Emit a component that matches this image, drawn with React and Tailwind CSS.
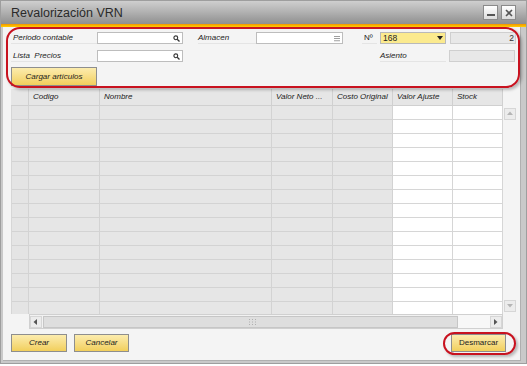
import React from "react";

const F = { fontFamily: '"Liberation Sans", Arial, sans-serif' };

function SearchIcon() {
  return (
    <svg width="7" height="7" viewBox="0 0 7 7" className="shrink-0">
      <circle cx="2.8" cy="2.8" r="1.9" fill="none" stroke="#333" strokeWidth="1.1" />
      <line x1="4.2" y1="4.2" x2="6.5" y2="6.5" stroke="#333" strokeWidth="1.3" />
    </svg>
  );
}

function ListIcon() {
  return (
    <svg width="6" height="7" viewBox="0 0 6 7" className="shrink-0">
      <rect x="0" y="1" width="6" height="0.8" fill="#888" />
      <rect x="0" y="3.2" width="6" height="0.8" fill="#888" />
      <rect x="0" y="5.4" width="6" height="0.8" fill="#888" />
    </svg>
  );
}

function Label({ children, w, className = "" }) {
  return (
    <div
      className={`h-full flex items-center text-[8px] text-[#222] italic border-b border-[#e4e4e4] ${className}`}
      style={{ width: w }}
    >
      {children}
    </div>
  );
}

function Input({ w, icon }) {
  return (
    <div
      className="h-full bg-white border border-[#bdbdbd] flex items-center justify-end pr-[2px]"
      style={{ width: w }}
    >
      {icon}
    </div>
  );
}

function YButton({ children, w, className = "" }) {
  return (
    <div
      className={`h-full flex items-center justify-center border border-[#8e8e8e] bg-gradient-to-b from-[#fcecad] to-[#f2cf5a] text-[8px] italic text-[#222] ${className}`}
      style={{ width: w }}
    >
      {children}
    </div>
  );
}

const cols = [
  { w: 18, t: "", white: false, rh: true },
  { w: 71, t: "Codigo" },
  { w: 172, t: "Nombre" },
  { w: 61, t: "Valor Neto ..." },
  { w: 60, t: "Costo Original" },
  { w: 60, t: "Valor Ajuste", white: true },
  { w: 50, t: "Stock", white: true },
];

function ArrowBox({ dir }) {
  const pts = {
    up: "1,5 4,1.5 7,5",
    down: "1,2 4,5.5 7,2",
    left: "5,1 1.5,4 5,7",
    right: "2,1 5.5,4 2,7",
  }[dir];
  return (
    <div className="w-[12px] h-[12px] flex items-center justify-center bg-[#ececec] border border-[#d6d6d6]">
      <svg width="8" height="8" viewBox="0 0 8 8">
        <polygon points={pts} fill={dir === "left" || dir === "right" ? "#555" : "#b5b5b5"} />
      </svg>
    </div>
  );
}

export default function App() {
  const rows = Array.from({ length: 15 });
  return (
    <div className="w-[527px] h-[366px] bg-white overflow-hidden" style={F}>
      <div className="w-[527px] h-[364px] bg-[#c9c9c9] flex flex-col border border-[#9e9e9e]">
        {/* Title bar */}
        <div className="h-[23px] shrink-0 bg-gradient-to-b from-[#cfcfcf] via-[#b0b0b0] to-[#8f8f8f] flex items-center pl-[10px] pr-[10px]">
          <div className="text-[12.5px] text-[#2a2a2a] flex-1 pt-[1px]">Revalorización VRN</div>
          <div className="flex gap-[3px]">
            <div className="w-[15px] h-[15px] bg-gradient-to-b from-white to-[#dcdcdc] border border-[#8a8a8a] flex items-end justify-center pb-[3px]">
              <div className="w-[8px] h-[2px] bg-[#555]" />
            </div>
            <div className="w-[15px] h-[15px] bg-gradient-to-b from-white to-[#dcdcdc] border border-[#8a8a8a] flex items-center justify-center">
              <svg width="8" height="8" viewBox="0 0 8 8">
                <path d="M1 1L7 7M7 1L1 7" stroke="#555" strokeWidth="1.6" />
              </svg>
            </div>
          </div>
        </div>
        {/* Stripe */}
        <div className="h-[3px] shrink-0 bg-gradient-to-b from-[#f29400] to-[#ffd000]" />
        {/* Body */}
        <div className="relative flex-1 bg-[#f4f4f4] ml-[2px] mr-[5px] mb-[2px] border-r border-b border-[#b0b0b0] flex flex-col pl-[8px] pt-[5px]">
          {/* Red annotation */}
          <div className="absolute left-[3px] top-[0px] w-[514px] h-[61px] rounded-[14px] border-2 border-[#c8121f] shadow-[2px_2px_3px_rgba(0,0,0,0.25)] pointer-events-none" />

          {/* Row 1 */}
          <div className="h-[12px] flex">
            <Label w={86} className="pl-[2px]">Periodo contable</Label>
            <Input w={86} icon={<SearchIcon />} />
            <Label w={58} className="ml-[15px]">Almacen</Label>
            <Input w={87} icon={<ListIcon />} />
            <Label w={15} className="ml-[19px] pl-[2px] not-italic">Nº</Label>
            <div className="ml-[3px] w-[66px] h-full bg-[#fbea8e] border border-[#b9b9b9] flex items-center pl-[2px] pr-[2px] text-[8.5px] text-[#222]">
              <span className="flex-1">168</span>
              <svg width="6" height="4" viewBox="0 0 6 4"><polygon points="0,0 6,0 3,4" fill="#222" /></svg>
            </div>
            <div className="ml-[4px] w-[66px] h-full bg-[#e8e8e8] border border-[#cfcfcf] flex items-center justify-end pr-[1px] text-[8.5px] text-[#333]">2</div>
          </div>
          {/* Row 2 */}
          <div className="h-[12px] flex mt-[6px]">
            <Label w={86} className="pl-[2px]">Lista&nbsp; Precios</Label>
            <Input w={86} icon={<SearchIcon />} />
            <Label w={66} className="ml-[197px]">Asiento</Label>
            <div className="ml-[3px] w-[66px] h-full bg-[#e8e8e8] border border-[#cfcfcf]" />
          </div>
          {/* Button */}
          <div className="h-[19px] mt-[5px] flex">
            <YButton w={86}>Cargar artículos</YButton>
          </div>

          {/* Grid */}
          <div className="mt-[3px] h-[240px] flex">
            <div className="w-[492px] flex flex-col">
              {/* header */}
              <div className="h-[17px] flex shrink-0">
                {cols.map((c, i) => (
                  <div
                    key={i}
                    className="h-full bg-[#e6e6e6] border-r border-b border-[#d0d0d0] flex items-center pl-[4px] text-[8px] italic text-[#222] whitespace-nowrap overflow-hidden"
                    style={{ width: c.w }}
                  >
                    {c.t}
                  </div>
                ))}
              </div>
              {/* rows */}
              <div className="h-[208px] overflow-hidden flex flex-col border-l border-[#d6d6d6]">
                {rows.map((_, r) => (
                  <div key={r} className="h-[14px] shrink-0 flex">
                    {cols.map((c, i) => (
                      <div
                        key={i}
                        className={`h-full border-r border-b ${c.white ? "bg-white border-[#d6d6d6]" : c.rh ? "bg-[#e4e4e4] border-[#d3d3d3]" : "bg-[#e6e6e6] border-[#d3d3d3]"}`}
                        style={{ width: i === 0 ? c.w - 1 : c.w }}
                      />
                    ))}
                  </div>
                ))}
              </div>
              {/* h scroll */}
              <div className="h-[15px] flex items-center pl-[18px]">
                <div className="w-[474px] h-[15px] flex items-center border border-[#d0d0d0] bg-[#f2f2f2]">
                  <ArrowBox dir="left" />
                  <div className="ml-[1px] w-[415px] h-[12px] bg-[#dedede] border border-[#c6c6c6] flex items-center justify-center">
                    <svg width="8" height="6" viewBox="0 0 8 6" className="ml-[4px]">
                      {[0, 3, 6].map((x) =>
                        [0, 2.5, 5].map((y) => <rect key={x + "-" + y} x={x} y={y} width="1" height="1" fill="#b0b0b0" />)
                      )}
                    </svg>
                  </div>
                  <div className="flex-1 h-full bg-[#f7f7f7]" />
                  <ArrowBox dir="right" />
                </div>
              </div>
            </div>
            {/* v scroll */}
            <div className="w-[15px] flex flex-col pl-[1px]">
              <div className="h-[19px]" />
              <ArrowBox dir="up" />
              <div className="flex-1" />
              <ArrowBox dir="down" />
              <div className="h-[17px]" />
            </div>
          </div>

          {/* Bottom buttons */}
          <div className="h-[18px] mt-[5px] flex relative">
            <YButton w={56}>Crear</YButton>
            <YButton w={55} className="ml-[7px]">Cancelar</YButton>
            <div className="flex-1" />
            <YButton w={55} className="mr-[14px] not-italic">Desmarcar</YButton>
            <div className="absolute right-[4px] top-[-2px] w-[73px] h-[23px] rounded-full border-2 border-[#c8121f] shadow-[2px_2px_3px_rgba(0,0,0,0.25)] pointer-events-none" />
          </div>
        </div>
      </div>
    </div>
  );
}
